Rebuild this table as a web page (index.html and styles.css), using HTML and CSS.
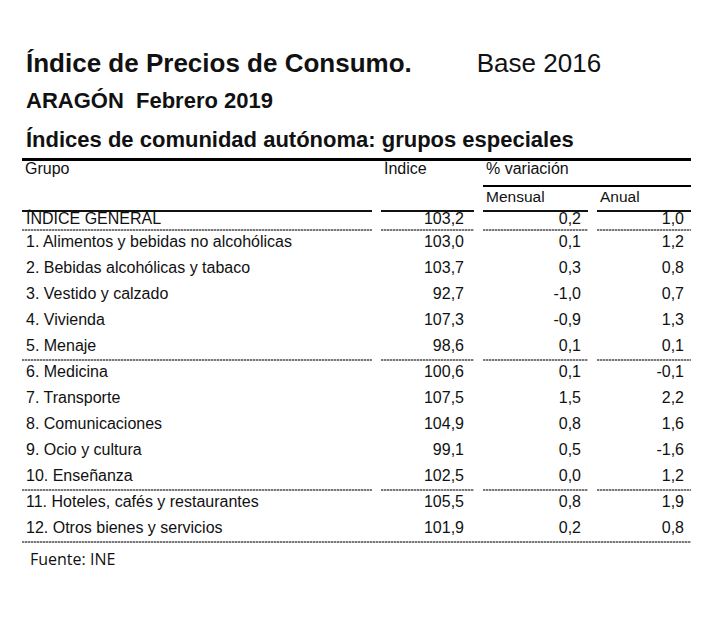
FILE: index.html
```html
<!DOCTYPE html>
<html lang="es">
<head>
<meta charset="utf-8">
<title>Índice de Precios de Consumo</title>
<link rel="stylesheet" href="styles.css">
</head>
<body>
<div class="page">
  <div class="title-row">
    <h1 class="title">Índice de Precios de Consumo.</h1>
    <span class="base">Base 2016</span>
  </div>
  <h2 class="region">ARAGÓN&nbsp;&nbsp;Febrero 2019</h2>
  <h3 class="subtitle">Índices de comunidad autónoma: grupos especiales</h3>

  <div class="table">
    <div class="thead">
      <div class="th grupo">Grupo</div>
      <div class="th indice">Índice</div>
      <div class="th var">% variación</div>
      <div class="th mens">Mensual</div>
      <div class="th anual">Anual</div>
    </div>
    <div class="tbody">
      <div class="td gen sep name">ÍNDICE GENERAL</div><div class="td gen sep num c2">103,2</div><div class="td gen sep num">0,2</div><div class="td gen sep num">1,0</div>

      <div class="td name">1. Alimentos y bebidas no alcohólicas</div><div class="td num c2">103,0</div><div class="td num">0,1</div><div class="td num">1,2</div>
      <div class="td name">2. Bebidas alcohólicas y tabaco</div><div class="td num c2">103,7</div><div class="td num">0,3</div><div class="td num">0,8</div>
      <div class="td name">3. Vestido y calzado</div><div class="td num c2">92,7</div><div class="td num">-1,0</div><div class="td num">0,7</div>
      <div class="td name">4. Vivienda</div><div class="td num c2">107,3</div><div class="td num">-0,9</div><div class="td num">1,3</div>
      <div class="td sep name">5. Menaje</div><div class="td sep num c2">98,6</div><div class="td sep num">0,1</div><div class="td sep num">0,1</div>

      <div class="td name">6. Medicina</div><div class="td num c2">100,6</div><div class="td num">0,1</div><div class="td num">-0,1</div>
      <div class="td name">7. Transporte</div><div class="td num c2">107,5</div><div class="td num">1,5</div><div class="td num">2,2</div>
      <div class="td name">8. Comunicaciones</div><div class="td num c2">104,9</div><div class="td num">0,8</div><div class="td num">1,6</div>
      <div class="td name">9. Ocio y cultura</div><div class="td num c2">99,1</div><div class="td num">0,5</div><div class="td num">-1,6</div>
      <div class="td sep name">10. Enseñanza</div><div class="td sep num c2">102,5</div><div class="td sep num">0,0</div><div class="td sep num">1,2</div>

      <div class="td name">11. Hoteles, cafés y restaurantes</div><div class="td num c2">105,5</div><div class="td num">0,8</div><div class="td num">1,9</div>
      <div class="td name">12. Otros bienes y servicios</div><div class="td num c2">101,9</div><div class="td num">0,2</div><div class="td num">0,8</div>
    </div>
    <div class="endrule"></div>
  </div>

  <p class="source">Fuente: INE</p>
</div>
</body>
</html>
```

FILE: styles.css
```css
html, body {
  margin: 0;
  padding: 0;
  background: #fff;
}

body {
  font-family: "Liberation Sans", Arial, sans-serif;
  color: #111;
}

.page {
  width: 720px;
}

.title-row {
  display: flex;
  align-items: baseline;
  gap: 65px;
  margin: 48px 0 0 0;
  padding-left: 26px;
  height: 30px;
  line-height: 30px;
}

.title {
  margin: 0;
  font-size: 26px;
  font-weight: bold;
  line-height: 30px;
}

.base {
  font-size: 26px;
  font-weight: normal;
  line-height: 30px;
}

.region {
  margin: 10px 0 0 0;
  padding-left: 26px;
  font-size: 22px;
  font-weight: bold;
  line-height: 26px;
}

.subtitle {
  margin: 13px 0 0 0;
  padding-left: 26px;
  font-size: 22px;
  font-weight: bold;
  line-height: 26px;
}

.table {
  margin: 5px 0 0 22px;
  width: 669px;
  border-top: 3px solid #000;
}

.thead,
.tbody {
  display: grid;
  grid-template-columns: 350px 93px 105px 94px;
  column-gap: 9px;
}

.thead {
  grid-template-rows: 26px 23px;
  font-size: 16px;
}

.th {
  box-sizing: border-box;
  padding-left: 3px;
}

.grupo { grid-column: 1; grid-row: 1; line-height: 16px; }
.indice { grid-column: 2; grid-row: 1; line-height: 16px; }
.var {
  grid-column: 3 / 5;
  grid-row: 1;
  line-height: 16px;
  border-bottom: 2px solid #000;
}
.mens { grid-column: 3; grid-row: 2; line-height: 20px; font-size: 15.5px; }
.anual { grid-column: 4; grid-row: 2; line-height: 20px; font-size: 15.5px; }

.tbody {
  grid-template-rows: 21px repeat(11, 26px) 24px;
  font-size: 16px;
}

.td {
  box-sizing: border-box;
  line-height: 21px;
  white-space: nowrap;
}

.td.name {
  padding-left: 4px;
}

.td.num {
  text-align: right;
  padding-right: 7px;
}

.td.num.c2 {
  padding-right: 10px;
}

.td.sep,
.endrule {
  border-style: solid;
  border-width: 0 0 2px 0;
  border-image: repeating-linear-gradient(90deg, #7a7a7a 0 2px, #c6c6c6 2px 3px) 0 0 2 0;
}

.td.gen {
  line-height: 14px;
  padding-top: 2px;
  background: linear-gradient(#111, #111) top left / 100% 2px no-repeat;
}

.endrule {
  height: 0;
}

.source {
  margin: 5px 0 0 0;
  padding-left: 30px;
  font-family: "Open Sans", "Liberation Sans", sans-serif;
  font-size: 16px;
  line-height: 22px;
  color: #111;
}
```
